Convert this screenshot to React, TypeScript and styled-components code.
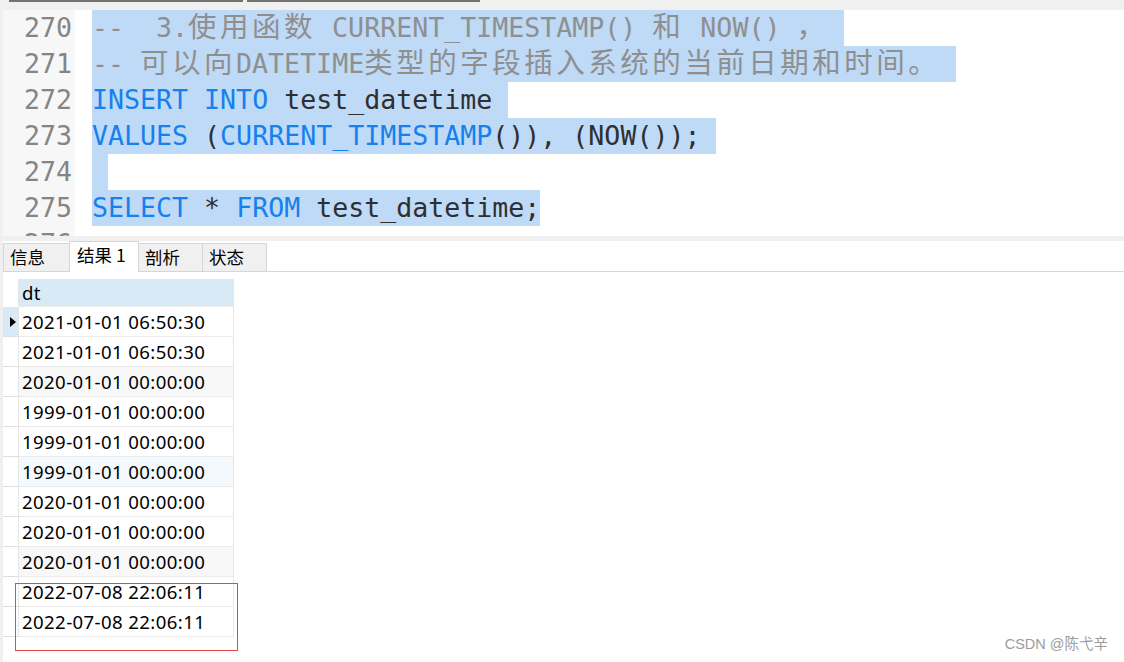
import React from 'react';
import styled, { createGlobalStyle } from 'styled-components';

const Global = createGlobalStyle`
  html, body { margin: 0; padding: 0; }
  body { width: 1124px; height: 662px; overflow: hidden; background: #f0f0f0; }
`;

const Page = styled.div`
  width: 1124px;
  height: 662px;
  background: #f0f0f0;
  display: flex;
  flex-direction: column;
  position: relative;
  overflow: hidden;
`;

const TopStrip = styled.div`
  height: 10px;
  flex: none;
  display: flex;
  gap: 4px;
  padding-left: 9px;
  align-items: flex-start;
`;

const ScrollTrack = styled.div<{ $w: number }>`
  width: ${(p) => p.$w}px;
  height: 2px;
  background: #727272;
`;

const Editor = styled.div`
  height: 226px;
  flex: none;
  display: flex;
  margin-left: 3px;
  overflow: hidden;
  background: #ffffff;
  font-family: "DejaVu Sans Mono", monospace;
  font-size: 26.6px;
`;

const Gutter = styled.div`
  width: 72px;
  flex: none;
  background: #f7f7f7;
  color: #858585;
  text-align: right;
  padding-right: 3px;
  box-sizing: border-box;
`;

const LineNo = styled.div`
  height: 36px;
  line-height: 36px;
`;

const Code = styled.div`
  flex: 1;
  padding-left: 17px;
`;

const CodeLine = styled.div`
  height: 36px;
  line-height: 36px;
  white-space: pre;
`;

const Sel = styled.span`
  display: inline-block;
  height: 36px;
  line-height: 36px;
  vertical-align: top;
  background: #bedaf7;
`;

const Kw = styled.span`
  color: #1580ee;
`;

const Tx = styled.span`
  color: #2f2f2f;
`;

const Cm = styled.span`
  color: #8f8f8f;
`;

const Cjk = styled.span`
  font-family: "Noto Sans CJK SC", sans-serif;
  font-size: 28.5px;
  line-height: 30px;
  letter-spacing: 3.5px;
`;

const Splitter = styled.div`
  height: 5px;
  flex: none;
`;

const TabBar = styled.div`
  height: 30px;
  flex: none;
  margin-left: 3px;
  background: #ffffff;
  border-bottom: 1px solid #d6d6d6;
  display: flex;
  align-items: flex-end;
  font-family: "Noto Sans CJK SC", sans-serif;
  font-size: 17.5px;
  line-height: 1.3;
  color: #000;
`;

const Tab = styled.div<{ $w: number; $active?: boolean }>`
  width: ${(p) => p.$w}px;
  height: ${(p) => (p.$active ? 31 : 28)}px;
  margin-bottom: ${(p) => (p.$active ? -1 : 0)}px;
  margin-left: -1px;
  &:first-child { margin-left: 0; }
  box-sizing: border-box;
  border: 1px solid #d6d6d6;
  border-bottom: none;
  background: ${(p) => (p.$active ? '#ffffff' : '#f0f0f0')};
  display: flex;
  align-items: center;
  padding-left: ${(p) => (p.$active ? 7 : 6)}px;
  padding-bottom: ${(p) => (p.$active ? 3 : 0)}px;
  position: relative;
  z-index: ${(p) => (p.$active ? 1 : 0)};
  white-space: pre;
`;

const Results = styled.div`
  flex: 1;
  margin-left: 3px;
  background: #ffffff;
  position: relative;
  padding-top: 7px;
`;

const Grid = styled.div`
  display: flex;
  flex-direction: column;
  font-family: "Noto Sans", sans-serif;
  font-size: 18.6px;
  letter-spacing: 0.4px;
  color: #000;
`;

const Row = styled.div<{ $h: number }>`
  display: flex;
  height: ${(p) => p.$h}px;
`;

const Indicator = styled.div<{ $current?: boolean; $header?: boolean }>`
  width: 16px;
  box-sizing: border-box;
  background: ${(p) => (p.$current ? '#d9eaf7' : '#ffffff')};
  border-bottom: 1px solid ${(p) => (p.$header ? 'transparent' : '#dedede')};
  border-right: 1px solid #e6e6e6;
  display: flex;
  align-items: center;
  justify-content: flex-end;
  padding-right: 2px;
`;

const Arrow = styled.div`
  width: 0;
  height: 0;
  border-left: 6px solid #000;
  border-top: 5px solid transparent;
  border-bottom: 5px solid transparent;
`;

const Cell = styled.div<{ $bg: string }>`
  width: 215px;
  box-sizing: border-box;
  background: ${(p) => p.$bg};
  border-bottom: 1px solid #ebebeb;
  border-right: 1px solid #e6e6e6;
  padding-left: 3px;
  display: flex;
  align-items: center;
  white-space: pre;
`;

const Mark = styled.div`
  position: absolute;
  left: 12px;
  top: 311px;
  width: 223px;
  height: 68px;
  box-sizing: border-box;
  border: 1px solid #e84545;
  pointer-events: none;
`;

const Watermark = styled.div`
  position: absolute;
  right: 16px;
  bottom: 9px;
  font-family: "Liberation Sans", "Noto Sans CJK SC", sans-serif;
  font-size: 14.5px;
  color: #9c9c9c;
`;

const rows: { v: string; bg: string }[] = [
  { v: '2021-01-01 06:50:30', bg: '#ffffff' },
  { v: '2021-01-01 06:50:30', bg: '#ffffff' },
  { v: '2020-01-01 00:00:00', bg: '#f8f8f8' },
  { v: '1999-01-01 00:00:00', bg: '#ffffff' },
  { v: '1999-01-01 00:00:00', bg: '#ffffff' },
  { v: '1999-01-01 00:00:00', bg: '#f4f9fe' },
  { v: '2020-01-01 00:00:00', bg: '#ffffff' },
  { v: '2020-01-01 00:00:00', bg: '#ffffff' },
  { v: '2020-01-01 00:00:00', bg: '#f8f8f8' },
  { v: '2022-07-08 22:06:11', bg: '#ffffff' },
  { v: '2022-07-08 22:06:11', bg: '#ffffff' },
];

const lineNumbers = [270, 271, 272, 273, 274, 275, 276];

export default function App() {
  return (
    <Page>
      <Global />
      <TopStrip>
        <ScrollTrack $w={234} />
        <ScrollTrack $w={233} />
      </TopStrip>
      <Editor>
        <Gutter>
          {lineNumbers.map((n) => (
            <LineNo key={n}>{n}</LineNo>
          ))}
        </Gutter>
        <Code>
          <CodeLine>
            <Sel>
              <Cm>
                {'--  3.'}
                <Cjk>使用函数</Cjk>
                {' CURRENT_TIMESTAMP() '}
                <Cjk>和</Cjk>
                {' NOW() '}
                <Cjk>，</Cjk>
                {' '}
              </Cm>
            </Sel>
          </CodeLine>
          <CodeLine>
            <Sel>
              <Cm>
                {'-- '}
                <Cjk>可以向</Cjk>
                {'DATETIME'}
                <Cjk>类型的字段插入系统的当前日期和时间。</Cjk>
                {' '}
              </Cm>
            </Sel>
          </CodeLine>
          <CodeLine>
            <Sel>
              <Kw>INSERT</Kw> <Kw>INTO</Kw> <Tx>test_datetime </Tx>
            </Sel>
          </CodeLine>
          <CodeLine>
            <Sel>
              <Kw>VALUES</Kw> <Tx>(</Tx>
              <Kw>CURRENT_TIMESTAMP</Kw>
              <Tx>()), (NOW()); </Tx>
            </Sel>
          </CodeLine>
          <CodeLine>
            <Sel>{' '}</Sel>
          </CodeLine>
          <CodeLine>
            <Sel>
              <Kw>SELECT</Kw> <Tx>*</Tx> <Kw>FROM</Kw> <Tx>test_datetime;</Tx>
            </Sel>
          </CodeLine>
          <CodeLine />
        </Code>
      </Editor>
      <Splitter />
      <TabBar>
        <Tab $w={67}>信息</Tab>
        <Tab $w={70} $active>结果 1</Tab>
        <Tab $w={65}>剖析</Tab>
        <Tab $w={65}>状态</Tab>
      </TabBar>
      <Results>
        <Grid>
          <Row $h={28}>
            <Indicator $header />
            <Cell $bg="#d9eaf7">dt</Cell>
          </Row>
          {rows.map((r, i) => (
            <Row $h={30} key={i}>
              <Indicator $current={i === 0}>{i === 0 && <Arrow />}</Indicator>
              <Cell $bg={r.bg}>{r.v}</Cell>
            </Row>
          ))}
        </Grid>
        <Mark />
      </Results>
      <Watermark>CSDN @陈弋辛</Watermark>
    </Page>
  );
}
